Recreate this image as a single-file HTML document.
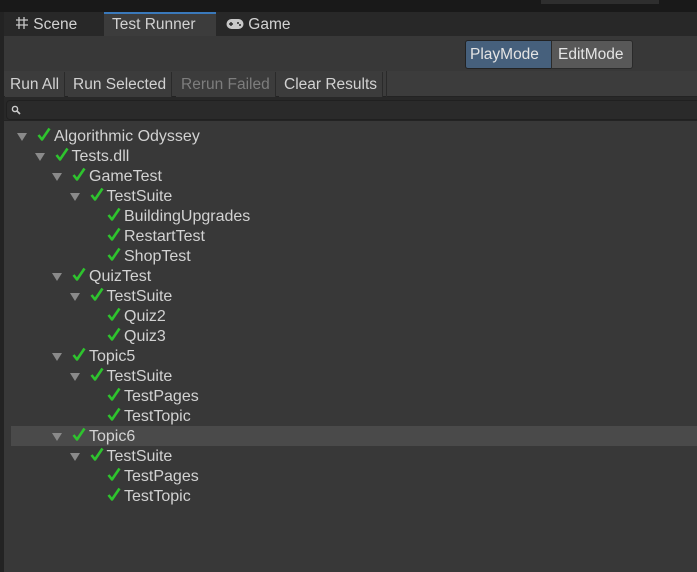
<!DOCTYPE html>
<html><head><style>
*{margin:0;padding:0;box-sizing:border-box}
body{width:697px;height:572px;background:#383838;font-family:"Liberation Sans",sans-serif;color:#d2d2d2;font-size:15.5px;position:relative;overflow:hidden}
.abs{position:absolute}
.row{position:absolute;height:20px;line-height:20px;white-space:nowrap;font-size:16px}
.tri{position:absolute;top:7px;width:0;height:0;border-left:5px solid transparent;border-right:5px solid transparent;border-top:8px solid #8a8a8a}
.chk{position:absolute;top:3px}
.btn{position:absolute;top:72px;height:26px;line-height:26px;background:#3c3c3c;padding:0 5px;color:#d2d2d2;border-right:1px solid #2a2a2a}
</style></head><body>
<div class="abs" style="left:0;top:0;width:697px;height:12px;background:#191919"></div>
<div class="abs" style="left:541px;top:0;width:118px;height:4px;background:#2e2e2e"></div>
<div class="abs" style="left:0;top:12px;width:697px;height:24px;background:#282828"></div>
<div class="abs" style="left:0;top:12px;width:4px;height:560px;background:#232323"></div>
<div class="abs" style="left:104px;top:12px;width:112px;height:24px;background:#3c3c3c;border-top:2px solid #3a79bb"></div>
<div class="abs" style="left:15px;top:15px;line-height:20px">
<svg width="14" height="14" style="vertical-align:-1px"><path d="M4 1v12M9 1v12M1 4h12M1 9h12" stroke="#c8c8c8" stroke-width="1.3" fill="none"/></svg> Scene</div>
<div class="abs" style="left:112px;top:15px;line-height:20px">Test Runner</div>
<div class="abs" style="left:226px;top:15px;line-height:20px"><svg width="18" height="12" style="vertical-align:-1px"><rect x="0.5" y="1" width="17" height="10" rx="5" fill="#c8c8c8"/><path d="M3 6h4M5 4v4" stroke="#282828" stroke-width="1.4"/><circle cx="12" cy="5" r="1" fill="#282828"/><circle cx="14" cy="7" r="1" fill="#282828"/></svg> Game</div>
<div class="abs" style="left:4px;top:36px;width:693px;height:35px;background:#383838"></div>
<div class="abs" style="left:465px;top:40px;width:87px;height:29px;background:#46607c;border:1px solid #222;border-radius:3px 0 0 3px;line-height:28px;padding-left:4px;color:#e4e4e4">PlayMode</div>
<div class="abs" style="left:551px;top:40px;width:82px;height:29px;background:#585858;border:1px solid #2a2a2a;border-radius:0 3px 3px 0;line-height:28px;padding-left:6px;color:#e4e4e4">EditMode</div>
<div class="abs" style="left:4px;top:71px;width:693px;height:26px;background:#3c3c3c;border-bottom:1px solid #232323"></div>
<div class="btn" style="left:5px">Run All</div>
<div class="btn" style="left:68px">Run Selected</div>
<div class="btn" style="left:176px;color:#7d7d7d">Rerun Failed</div>
<div class="btn" style="left:279px">Clear Results</div>
<div class="abs" style="left:386px;top:71px;width:1px;height:26px;background:#2a2a2a"></div>
<div class="abs" style="left:4px;top:97px;width:693px;height:24px;background:#282828;border-bottom:1px solid #232323"></div>
<div class="abs" style="left:6px;top:100px;width:700px;height:20px;background:#2a2a2a;border:1px solid #202020;border-radius:4px"></div>
<svg class="abs" style="left:11px;top:105px" width="10" height="10"><circle cx="4" cy="4" r="2.6" stroke="#ccc" stroke-width="1.4" fill="none"/><path d="M6 6l3 3" stroke="#ccc" stroke-width="1.6"/></svg>
<div class="abs" style="left:11px;top:426px;width:686px;height:20px;background:#4a4a4a"></div>
<div id="tree"></div>
<script>
var items=[[0,"Algorithmic Odyssey",1],[1,"Tests.dll",1],[2,"GameTest",1],[3,"TestSuite",1],[4,"BuildingUpgrades",0],[4,"RestartTest",0],[4,"ShopTest",0],[2,"QuizTest",1],[3,"TestSuite",1],[4,"Quiz2",0],[4,"Quiz3",0],[2,"Topic5",1],[3,"TestSuite",1],[4,"TestPages",0],[4,"TestTopic",0],[2,"Topic6",1],[3,"TestSuite",1],[4,"TestPages",0],[4,"TestTopic",0]];
var h="";
items.forEach(function(it,i){var lv=it[0],y=126+i*20,x=17+lv*17.5;
h+='<div class="row" style="top:'+y+'px;left:0;width:697px">';
if(it[2])h+='<div class="tri" style="left:'+x+'px"></div>';
h+='<svg class="chk" style="left:'+(x+20)+'px;top:1px" width="14" height="14"><path d="M1.5 8l3.5 4.5L12.5 1.5" stroke="#2ec32e" stroke-width="2.6" fill="none" stroke-linejoin="round"/></svg>';
h+='<span style="position:absolute;top:1px;left:'+(x+37)+'px">'+it[1]+'</span></div>';});
document.getElementById("tree").innerHTML=h;
</script>
</body></html>
